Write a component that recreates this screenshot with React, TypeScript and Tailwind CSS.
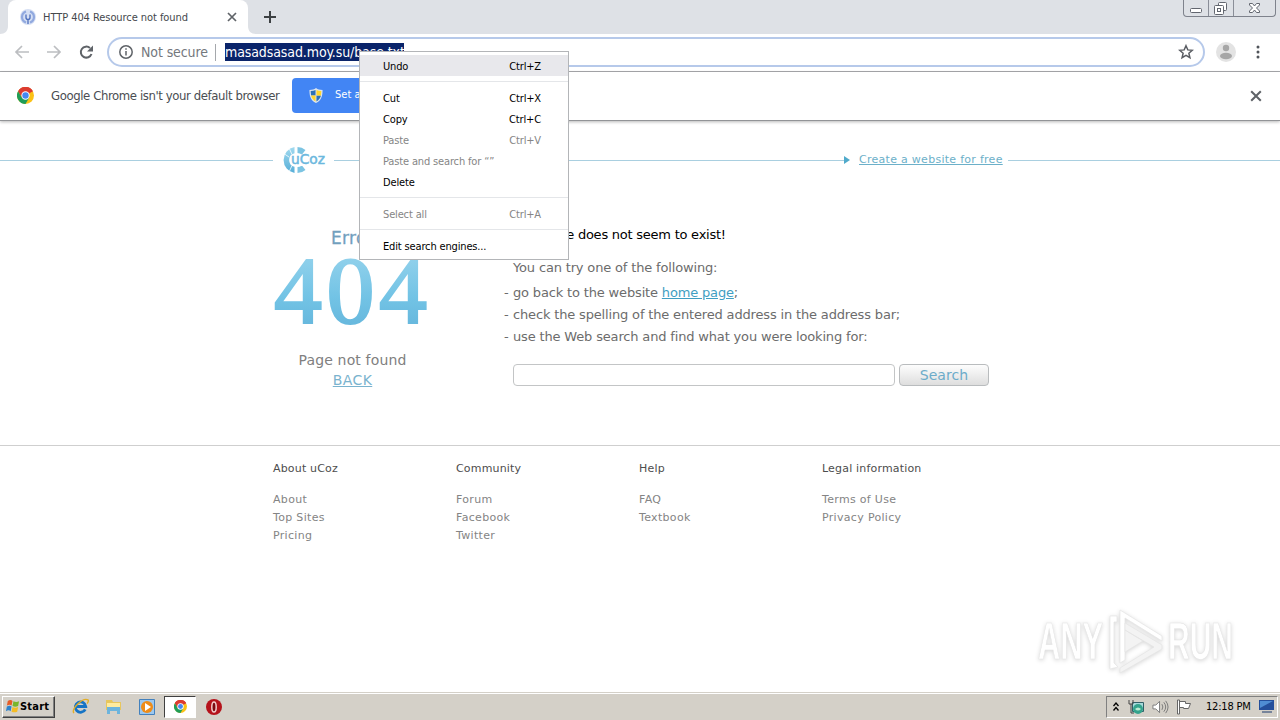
import type { ReactNode } from "react";

const footerColumns = [
  { title: "About uCoz", links: ["About", "Top Sites", "Pricing"] },
  { title: "Community", links: ["Forum", "Facebook", "Twitter"] },
  { title: "Help", links: ["FAQ", "Textbook"] },
  { title: "Legal information", links: ["Terms of Use", "Privacy Policy"] },
];

function ChromeLogo({ className }: { className: string }) {
  return (
    <svg viewBox="0 0 16 16" className={className} aria-hidden>
      <circle cx="8" cy="8" r="8" fill="#fbc116" />
      <path d="M8 8 1.07 4A8 8 0 0 1 14.93 4Z" fill="#dc3b30" />
      <path d="M8 8V4h6.93A8 8 0 0 0 1.07 4l3.47 6Z" fill="#dc3b30" />
      <path d="M1.07 4A8 8 0 0 0 8 16l3.46-6H4.54Z" fill="#1f9d58" />
      <circle cx="8" cy="8" r="3.9" fill="#fff" />
      <circle cx="8" cy="8" r="3" fill="#4688f1" />
    </svg>
  );
}

function Cross({ className }: { className: string }) {
  return (
    <svg viewBox="0 0 10 10" className={className} fill="none" stroke="#5f6368" strokeWidth="1.7" aria-hidden>
      <path d="m1 1 8 8M9 1 1 9" />
    </svg>
  );
}

function TabStrip() {
  return (
    <div className="flex h-[34px] justify-between bg-[#dee1e6]">
      <div className="flex">
        <svg viewBox="0 0 8 34" className="h-[34px] w-2" aria-hidden>
          <path d="M0 34c5 0 8-3 8-8v8Z" fill="#fff" />
        </svg>
        <div className="flex w-[240px] items-center rounded-t-lg bg-white pl-3">
          <svg viewBox="0 0 16 16" className="size-4" aria-hidden>
            <circle cx="8" cy="8" r="8" fill="#d5dff3" />
            <path d="M6 2.5a5.8 5.8 0 0 0 0 11M10 2.5a5.8 5.8 0 0 1 0 11" fill="none" stroke="#91a9df" strokeWidth="2.2" />
            <path d="M6 5.5v3q0 2 2 2t2-2v-3M8 10.5V15" fill="none" stroke="#4d6fbd" strokeWidth="1.3" />
          </svg>
          <span className="ml-[7px] w-[184px] pt-[2px] text-[11px] tracking-[-0.06px] whitespace-nowrap text-[#45484d]">
            HTTP 404 Resource not found
          </span>
          <Cross className="size-[10px]" />
        </div>
        <svg viewBox="0 0 8 34" className="h-[34px] w-2" aria-hidden>
          <path d="M8 34c-5 0-8-3-8-8v8Z" fill="#fff" />
        </svg>
        <svg viewBox="0 0 12 12" className="mt-[11px] ml-2 size-3" stroke="#3c4043" strokeWidth="2" aria-hidden>
          <path d="M6 0v12M0 6h12" />
        </svg>
      </div>
      <div className="mr-1 flex h-[17px] w-[93px] rounded-b border border-t-0 border-[#7e828c]">
        <svg viewBox="0 0 91 16" className="h-4 w-[91px]" fill="none" stroke="#62666f" aria-hidden>
          <path d="M24.5 0v16M49.5 0v16" stroke="#8a8e98" />
          <rect x="6.5" y="8.5" width="11" height="4" rx="1" fill="#fff" />
          <rect x="34.5" y="2.5" width="8" height="8" rx="1" fill="#fff" />
          <rect x="30.5" y="5.5" width="9" height="9" rx="1" fill="#fff" />
          <rect x="33.5" y="8.5" width="3" height="3" />
          <path d="M65.5 3.5h3l2 2.5 2-2.5h3v1.5l-3 3 3 3v1.5h-3l-2-2.5-2 2.5h-3v-1.5l3-3-3-3Z" fill="#fff" />
        </svg>
      </div>
    </div>
  );
}

function Toolbar() {
  return (
    <div className="flex h-[38px] items-center border-b border-[#a9abae] bg-white pb-px">
      <svg viewBox="0 0 84 16" className="ml-[14px] h-4 w-[84px]" fill="none" strokeWidth="1.7" aria-hidden>
        <path d="M15 8H2M8 2 2 8l6 6M33 8h13M40 2l6 6-6 6" stroke="#bcbec1" />
        <path d="M77.5 10a5.5 5.5 0 1 1-1.5-6" stroke="#5f6368" strokeWidth="2" />
        <path d="M79 1.5v6h-6Z" fill="#5f6368" />
      </svg>
      <div className="ml-[9px] flex h-[30px] w-[1098px] items-center rounded-full border-2 border-[#b6c9ea] pl-[10px]">
        <svg viewBox="0 0 14 14" className="size-[14px]" fill="none" stroke="#5f6368" strokeWidth="1.5" aria-hidden>
          <circle cx="7" cy="7" r="6.2" />
          <path d="M7 6v4.5M7 3.3v1.5" />
        </svg>
        <span className="ml-2 w-[74px] text-[14px] tracking-[-0.1px] whitespace-nowrap text-[#74787d]">Not secure</span>
        <span className="h-[17px] w-px bg-[#a5a8ac]" />
        <span className="ml-[9px] h-[18px] w-[179px] bg-[#0a246a] text-[14px] leading-[18px] tracking-[-0.1px] whitespace-nowrap text-white">
          masadsasad.moy.su/base.txt
        </span>
        <svg viewBox="0 0 24 24" className="ml-[774px] size-4" fill="none" stroke="#5a5d63" strokeWidth="2.2" aria-hidden>
          <path d="m12 2.5 2.7 6.3 6.8.6-5.2 4.5 1.6 6.7L12 17l-5.9 3.6 1.6-6.7-5.2-4.5 6.8-.6Z" />
        </svg>
      </div>
      <svg viewBox="0 0 20 20" className="ml-[11px] size-5" aria-hidden>
        <circle cx="10" cy="10" r="10" fill="#e3e3e3" />
        <circle cx="10" cy="6" r="3.2" fill="#a6a6a6" />
        <ellipse cx="10" cy="14" rx="6" ry="3.2" fill="#a6a6a6" />
      </svg>
      <svg viewBox="0 0 4 14" className="ml-[20px] h-[14px] w-1" fill="#50545a" aria-hidden>
        <circle cx="2" cy="2" r="1.5" />
        <circle cx="2" cy="7" r="1.5" />
        <circle cx="2" cy="12" r="1.5" />
      </svg>
    </div>
  );
}

function InfoBar() {
  return (
    <div className="flex h-[49px] items-center border-b border-[#929497] bg-white pb-px shadow-[0_1px_3px_rgba(0,0,0,0.28)]">
      <ChromeLogo className="ml-[17px] size-[17px]" />
      <span className="ml-[17px] w-[241px] text-[13px] tracking-[-0.4px] whitespace-nowrap text-[#4a4d52]">
        Google Chrome isn't your default browser
      </span>
      <div className="flex h-[35px] w-[150px] items-center rounded bg-[#4285f4] pl-[17px] text-[11px] whitespace-nowrap text-white">
        <svg viewBox="0 0 14 16" className="h-[15px] w-[14px]" aria-hidden>
          <path d="M7 0c2 1.5 4 2 7 2 0 6-1 11-7 14C1 13 0 8 0 2c3 0 5-.5 7-2Z" fill="#dce5ee" />
          <path d="M6.5 2v6H1.7L1.3 3.3Q4.5 3 6.5 2ZM7.5 8h4.8q-.8 4-4.8 6.3Z" fill="#2c6fb7" />
          <path d="M7.5 2v6h4.8l.4-4.7Q9.5 3 7.5 2ZM6.5 8H1.7q.8 4 4.8 6.3Z" fill="#ffd52c" />
        </svg>
        <span className="ml-3">Set as default</span>
      </div>
      <Cross className="ml-[808px] size-3" />
    </div>
  );
}

function UcozLogo() {
  return (
    <svg viewBox="0 0 50 28" className="h-7 w-[50px]" aria-hidden>
      <defs>
        <linearGradient id="ucoz" x1="0" y1="0" x2="0" y2="1">
          <stop offset="0" stopColor="#a2daef" />
          <stop offset="1" stopColor="#56aed8" />
        </linearGradient>
      </defs>
      <path d="M13.5 1v6.2a7 7 0 0 0 0 13.600V27a13.200 13.200 0 0 1 0-26Z" fill="url(#ucoz)" />
      <path d="M16.500 1q4.500 0 8 3l-3.500 4.500Q18.500 7 16.500 7ZM16.500 27q4.500 0 8-3l-3.500-4.500Q18.500 21 16.500 21Z" fill="#7cc4e2" />
      <path d="M8.500 3 11 8.500M3.500 8 8 11M8.500 25 11 19.500" fill="none" stroke="#fff" strokeWidth="0.8" />
      <rect x="11" y="9" width="33" height="11" fill="#fff" />
      <text
        x="10"
        y="18"
        textLength="34"
        lengthAdjust="spacingAndGlyphs"
        fontSize="14"
        fill="#6cb8de"
        stroke="#6cb8de"
        strokeWidth="0.5"
        className="font-['DejaVu_Sans',sans-serif]"
      >
        uCoz
      </text>
    </svg>
  );
}

function SiteHeader() {
  return (
    <div className="mt-[25px] flex h-7 items-center">
      <span className="h-px w-[273px] bg-[#a9cfe0]" />
      <span className="ml-2">
        <UcozLogo />
      </span>
      <span className="ml-[3px] h-px w-[510px] bg-[#a9cfe0]" />
      <svg viewBox="0 0 6 8" className="h-2 w-[6px]" aria-hidden>
        <path d="m0 0 6 4-6 4Z" fill="#50aacb" />
      </svg>
      <a className="ml-[9px] w-[149px] text-[11px] tracking-[0.28px] whitespace-nowrap text-[#6cb0c9] underline">
        Create a website for free
      </a>
      <span className="h-px flex-1 bg-[#a9cfe0]" />
    </div>
  );
}

function ErrorCode() {
  return (
    <svg viewBox="0 0 159 80" className="mt-px h-20 w-[159px]" aria-hidden>
      <defs>
        <linearGradient id="code" gradientUnits="userSpaceOnUse" x1="0" y1="8" x2="0" y2="72">
          <stop offset="0" stopColor="#8fd0eb" />
          <stop offset="0.6" stopColor="#72c3e5" />
          <stop offset="1" stopColor="#68b9de" />
        </linearGradient>
      </defs>
      <text
        x="1"
        y="72"
        textLength="153"
        fontSize="96"
        fill="url(#code)"
        stroke="url(#code)"
        strokeWidth="2.2"
        className="font-['Liberation_Serif',serif]"
      >
        404
      </text>
    </svg>
  );
}

function Hint({ children }: { children: ReactNode }) {
  return (
    <li className="flex h-[22px] items-center whitespace-nowrap">
      <span className="w-[9px]">-</span>
      <span>{children}</span>
    </li>
  );
}

function ErrorBody() {
  return (
    <div className="mt-[52px] flex h-[219px]">
      <div className="ml-[273px] flex w-[159px] flex-col items-center whitespace-nowrap">
        <div className="h-6 text-[17px] leading-6 tracking-[0.3px] text-[#729fbe] [-webkit-text-stroke:0.3px_#729fbe]">Error</div>
        <ErrorCode />
        <div className="mt-[19px] text-[14px] leading-5 tracking-[0.15px] text-[#808080]">Page not found</div>
        <a className="text-[14px] leading-5 tracking-[0.4px] text-[#7ab3ce] underline">BACK</a>
      </div>
      <div className="ml-[72px] text-[13px] tracking-[-0.16px] text-[#6c6c6c]">
        <div className="-mt-px ml-[9px] h-5 leading-5 tracking-[-0.24px] whitespace-nowrap text-black">
          This page does not seem to exist!
        </div>
        <div className="mt-[13px] ml-[9px] h-5 leading-5">You can try one of the following:</div>
        <ul className="mt-[4px]">
          <Hint>
            go back to the website <a className="text-[#3f9ec2] underline">home page</a>;
          </Hint>
          <Hint>check the spelling of the entered address in the address bar;</Hint>
          <Hint>use the Web search and find what you were looking for:</Hint>
        </ul>
        <div className="mt-4 ml-[9px] flex">
          <input className="h-[22px] w-[382px] rounded border border-[#c3c5c6] bg-white" />
          <button className="ml-1 h-[22px] w-[90px] rounded border border-[#b9bcbe] bg-linear-to-b from-[#fdfdfd] to-[#dedede] text-[14px] leading-5 tracking-[0.1px] text-[#6cacca]">
            Search
          </button>
        </div>
      </div>
    </div>
  );
}

function SiteFooter() {
  return (
    <div className="flex border-t border-[#cfcfcf] pt-[14px] pl-[273px] text-[11px] tracking-[0.18px]">
      {footerColumns.map((col) => (
        <div key={col.title} className="w-[183px] whitespace-nowrap">
          <div className="h-[18px] leading-[18px] text-[#4d4d4d]">{col.title}</div>
          <ul className="mt-[13px] tracking-[0.32px] text-[#848484]">
            {col.links.map((link) => (
              <li key={link} className="h-[18px] leading-[18px]">
                {link}
              </li>
            ))}
          </ul>
        </div>
      ))}
    </div>
  );
}

function MenuItem({ label, keys, disabled, active }: { label: string; keys?: string; disabled?: boolean; active?: boolean }) {
  return (
    <div
      className={`flex h-[21px] items-center justify-between pt-1 pr-[27px] pl-[23px] ${active ? "bg-[#e8e8ec]" : ""} ${
        disabled ? "text-[#858585]" : "text-black"
      }`}
    >
      <span>{label}</span>
      <span>{keys}</span>
    </div>
  );
}

function MenuDivider() {
  return <div className="my-[5px] h-px bg-[#e4e6e9]" />;
}

function ContextMenu() {
  return (
    <div className="absolute top-[51px] left-[359px] h-[209px] w-[210px] border border-[#b3b5b8] bg-white pt-[3px] text-[11px] tracking-[-0.15px] whitespace-nowrap">
      <MenuItem label="Undo" keys="Ctrl+Z" active />
      <MenuDivider />
      <MenuItem label="Cut" keys="Ctrl+X" />
      <MenuItem label="Copy" keys="Ctrl+C" />
      <MenuItem label="Paste" keys="Ctrl+V" disabled />
      <MenuItem label="Paste and search for “”" disabled />
      <MenuItem label="Delete" />
      <MenuDivider />
      <MenuItem label="Select all" keys="Ctrl+A" disabled />
      <MenuDivider />
      <MenuItem label="Edit search engines..." />
    </div>
  );
}

function Watermark() {
  return (
    <svg
      viewBox="0 0 220 70"
      className="absolute top-[606px] left-[1033px] h-[70px] w-[220px] drop-shadow-[0_1px_2px_rgba(0,0,0,0.16)]"
      fill="#fff"
      stroke="#e4e4e4"
      strokeWidth="0.7"
      aria-hidden
    >
      <g className="font-['Liberation_Sans',sans-serif] font-bold" fontSize="52">
        <text x="5" y="53" textLength="65" lengthAdjust="spacingAndGlyphs">ANY</text>
        <text x="135" y="53" textLength="65" lengthAdjust="spacingAndGlyphs">RUN</text>
      </g>
      <path d="M87 4 129 30v5L92 12v42l-5 3Z" />
      <path d="M92 24v22l18-11ZM92 17l37 22v4L87 67v-5l34-21-29-17Z" fill="#f3f3f3" fillRule="evenodd" />
      <path d="M77 10h7v6h-3v41l4 4-8 2Z" />
    </svg>
  );
}

function Taskbar() {
  return (
    <div className="flex h-[28px] items-center border-t border-[#d4d0c8] bg-[#d4d0c8] shadow-[inset_0_1px_0_#fff]">
      <div className="ml-[2px] flex h-[22px] w-[53px] items-center border border-t-white border-r-[#404040] border-b-[#404040] border-l-white pl-[2px] text-[11px] font-bold text-black shadow-[inset_-1px_-1px_0_#808080]">
        <svg viewBox="0 0 16 16" className="size-[15px] shrink-0" aria-hidden>
          <path d="M3 2q3-2 5 0L7 7Q5 5 2 7Z" fill="#e65d27" />
          <path d="M9 2.5q3 1.5 6 0l-1 5q-3 1.5-6 0Z" fill="#79b62c" />
          <path d="M2 8q3-1.800 5 0l-1 5q-2-2-5 0Z" fill="#2d83cc" />
          <path d="M8 8.500q3 1.500 6 0l-1 5q-3 1.500-6 0Z" fill="#f5bc24" />
        </svg>
        <span className="pt-[2px] tracking-[0.2px]">Start</span>
      </div>
      <svg viewBox="0 0 18 18" className="ml-[17px] size-[17px]" fill="none" aria-hidden>
        <path d="M14 12a5.500 5.500 0 1 1 .5-3H5" stroke="#1674c5" strokeWidth="3" />
        <path d="M2 16C-1 12 11-1 17 2q1 1-1 4" stroke="#e2ae27" strokeWidth="1.5" />
      </svg>
      <svg viewBox="0 0 17 17" className="ml-4 size-[17px]" aria-hidden>
        <path d="M1 2h6l1 2h8v8H1Z" fill="#e7c65d" />
        <path d="M2 5h13v6H2Z" fill="#ffeb9e" />
        <path d="M2 16V9h13v7h-3v-3H5v3Z" fill="#6cb4dd" />
      </svg>
      <svg viewBox="0 0 16 16" className="ml-[17px] size-4" aria-hidden>
        <path d="M.5.5h15v15H.5Z" fill="#9cc8ef" stroke="#4381bd" />
        <circle cx="8" cy="8" r="6" fill="#ee8c18" />
        <path d="m6 4 6 4-6 4Z" fill="#fff" />
      </svg>
      <div className="ml-[9px] flex h-[22px] w-8 items-center justify-center border border-t-[#404040] border-r-white border-b-white border-l-[#404040] bg-white">
        <ChromeLogo className="size-[13px]" />
      </div>
      <svg viewBox="0 0 16 16" className="ml-[10px] size-4" aria-hidden>
        <circle cx="8" cy="8" r="8" fill="#b5121b" />
        <ellipse cx="8" cy="8" rx="2.2" ry="5" fill="#7b0910" stroke="#f2cdcd" strokeWidth="1.5" />
      </svg>
      <div className="mr-[2px] ml-auto flex h-[22px] w-[172px] items-center border border-t-[#808080] border-r-white border-b-white border-l-[#808080] pl-[6px]">
        <svg viewBox="0 0 6 9" className="h-[9px] w-[6px]" fill="none" stroke="#000" strokeWidth="1.3" aria-hidden>
          <path d="m.5 4 2.500-3 2.500 3M.500 8.500l2.500-3 2.500 3" />
        </svg>
        <svg viewBox="0 0 16 16" className="ml-[9px] size-4" aria-hidden>
          <path d="M4.500 3.500h11v9h-11Z" fill="#a7d9db" stroke="#315f67" />
          <circle cx="10" cy="10" r="5" fill="#35a38c" />
          <path d="M7 10q3-3 6 0-3 3-6 0Z" fill="#bcebd2" />
          <path d="M1 1v4h4V1M3 5v9h3" fill="none" stroke="#444" />
        </svg>
        <svg viewBox="0 0 18 16" className="ml-2 h-4 w-[17px]" fill="none" stroke="#777" aria-hidden>
          <path d="M1 6h3l4-4v12l-4-4H1Z" fill="#fff" />
          <path d="M10.500 5q2 3 0 6M12.500 3q4 5 0 10M14.500 1.500q5 6.500 0 13" />
        </svg>
        <svg viewBox="0 0 16 16" className="ml-[7px] size-4" fill="#fff" stroke="#666" aria-hidden>
          <path d="M1.500 1v14h2V1ZM3.500 2.500h6v2h5l-2 5h-5v-1h-4Z" />
        </svg>
        <span className="ml-[14px] w-[46px] pt-[2px] text-[11px] tracking-[-0.2px] whitespace-nowrap text-black">12:18 PM</span>
        <svg viewBox="0 0 15 13" className="ml-[7px] h-[13px] w-[15px] shrink-0" aria-hidden>
          <path d="M0 0h15v10H0Z" fill="#244f9b" />
          <path d="M1 1h13L1 8Z" fill="#4f8dd3" />
          <path d="M3 11h10v2H3Z" fill="#77849a" />
        </svg>
      </div>
    </div>
  );
}

export default function App() {
  return (
    <div className="relative flex h-[720px] w-[1280px] flex-col overflow-hidden bg-white font-['DejaVu_Sans_Condensed','DejaVu_Sans',sans-serif]">
      <TabStrip />
      <Toolbar />
      <InfoBar />
      <main className="flex-1 font-['DejaVu_Sans',sans-serif]">
        <SiteHeader />
        <ErrorBody />
        <SiteFooter />
      </main>
      <Taskbar />
      <Watermark />
      <ContextMenu />
    </div>
  );
}
